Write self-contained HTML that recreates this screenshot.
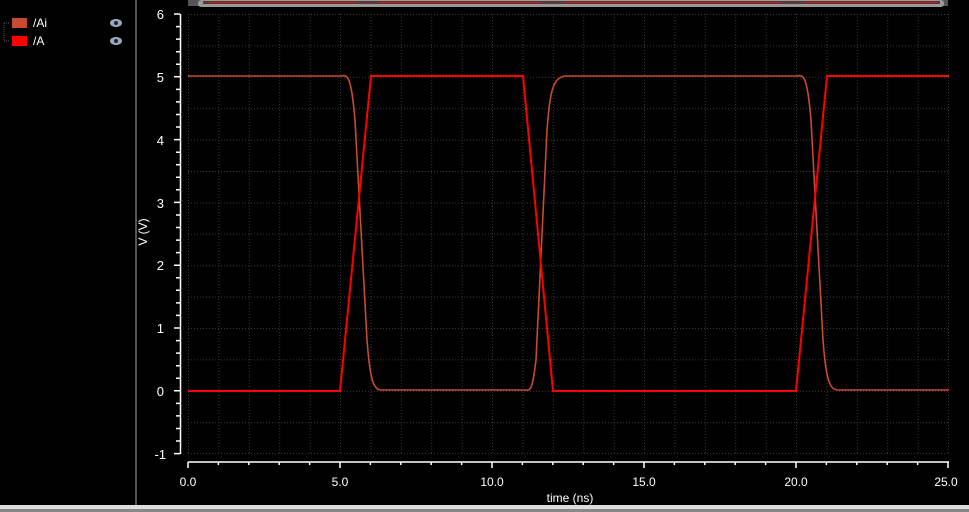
<!DOCTYPE html>
<html><head><style>
html,body{margin:0;padding:0;background:#000;width:969px;height:512px;overflow:hidden;font-family:"Liberation Sans",sans-serif}
</style></head><body>
<svg width="969" height="512" xmlns="http://www.w3.org/2000/svg" font-family="Liberation Sans, sans-serif">
<rect width="969" height="512" fill="#000"/>
<rect x="135" y="0" width="2" height="505" fill="#555"/>
<path d="M4 23 H10 M4 41 H10 M4 23 V41" stroke="#555" stroke-dasharray="1 1"/>
<rect x="12" y="18" width="15" height="10" fill="#c84a30"/>
<rect x="12" y="36" width="15" height="10" fill="#f00"/>
<text x="33" y="27" fill="#fff" font-size="12">/Ai</text>
<text x="33" y="45" fill="#fff" font-size="12">/A</text>
<ellipse cx="116" cy="23" rx="6" ry="4" fill="#9ab"/><circle cx="116" cy="23" r="2" fill="#223"/>
<ellipse cx="116" cy="41" rx="6" ry="4" fill="#9ab"/><circle cx="116" cy="41" r="2" fill="#223"/>
<rect x="188" y="0" width="760" height="6" fill="#555"/>
<rect x="198" y="0" width="746" height="7" rx="3" fill="#999"/>
<rect x="203" y="1" width="737" height="3" fill="#5a3a36"/>
<path d="M210 2.5H355 M380 2.5H540 M565 2.5H780 M805 2.5H935" stroke="#b02020" stroke-width="1.5"/>
<g stroke="#3a3a3a" stroke-dasharray="1 2" stroke-width="1">
<path d="M188.5 14V453 M218.9 14V453 M249.3 14V453 M279.7 14V453 M310.1 14V453 M340.5 14V453 M370.9 14V453 M401.3 14V453 M431.7 14V453 M462.1 14V453 M492.5 14V453 M522.9 14V453 M553.3 14V453 M583.7 14V453 M614.1 14V453 M644.5 14V453 M674.9 14V453 M705.3 14V453 M735.7 14V453 M766.1 14V453 M796.5 14V453 M826.9 14V453 M857.3 14V453 M887.7 14V453 M918.1 14V453 M948.5 14V453"/>
<path d="M188 14.5H949 M188 45.9H949 M188 77.3H949 M188 108.7H949 M188 140.1H949 M188 171.5H949 M188 202.9H949 M188 234.3H949 M188 265.7H949 M188 297.1H949 M188 328.5H949 M188 359.9H949 M188 391.3H949 M188 422.7H949 M188 453.5H949"/>
</g>
<g stroke="#fff" stroke-width="1.5" fill="none">
<path d="M180.5 14V454 M174 14H180 M174 76.8H180 M174 139.6H180 M174 202.4H180 M174 265.2H180 M174 328H180 M174 390.8H180 M174 453.6H180"/>
<path d="M176 26.6H180 M176 39.1H180 M176 51.7H180 M176 64.2H180 M176 89.4H180 M176 101.9H180 M176 114.5H180 M176 127H180 M176 152.2H180 M176 164.7H180 M176 177.3H180 M176 189.8H180 M176 215H180 M176 227.5H180 M176 240.1H180 M176 252.6H180 M176 277.8H180 M176 290.3H180 M176 302.9H180 M176 315.4H180 M176 340.6H180 M176 353.1H180 M176 365.7H180 M176 378.2H180 M176 403.4H180 M176 415.9H180 M176 428.5H180 M176 441H180"/>
<path d="M188 462H949 M188 462V468 M340 462V468 M492 462V468 M644 462V468 M796 462V468 M948 462V468 M218.4 462V465 M248.8 462V465 M279.2 462V465 M309.6 462V465 M370.4 462V465 M400.8 462V465 M431.2 462V465 M461.6 462V465 M522.4 462V465 M552.8 462V465 M583.2 462V465 M613.6 462V465 M674.4 462V465 M704.8 462V465 M735.2 462V465 M765.6 462V465 M826.4 462V465 M856.8 462V465 M887.2 462V465 M917.6 462V465"/>
</g>
<g fill="#fff" font-size="13" text-anchor="end">
<text x="164" y="19">6</text><text x="164" y="82">5</text><text x="164" y="145">4</text><text x="164" y="208">3</text><text x="164" y="270">2</text><text x="164" y="333">1</text><text x="164" y="396">0</text><text x="166" y="459">-1</text>
</g>
<g fill="#fff" font-size="12" text-anchor="middle">
<text x="188" y="486">0.0</text><text x="340" y="486">5.0</text><text x="492" y="486">10.0</text><text x="644" y="486">15.0</text><text x="796" y="486">20.0</text><text x="946" y="486">25.0</text>
<text x="570" y="502">time (ns)</text>
</g>
<text transform="translate(147,232) rotate(-90)" fill="#fff" font-size="12" text-anchor="middle">V (V)</text>
<path d="M188 76 H342 C349 73 352 85 355 120 L367 340 C370 378 373 390 381 390 H526 C531 392 533 385 536 360 L547 130 C550 90 553 78 565 76 H798 C805 73 808 85 811 120 L823 340 C826 378 829 390 838 390 H949" fill="none" stroke="#c84a30" stroke-width="1.6"/>
<path d="M188 391 H340 L371 76 H523 L553 391 H796 L827 76 H949" fill="none" stroke="#f00" stroke-width="2"/>
<rect x="0" y="505" width="969" height="7" fill="#ddd"/>
<rect x="0" y="509" width="969" height="3" fill="#888"/>
</svg>
</body></html>
